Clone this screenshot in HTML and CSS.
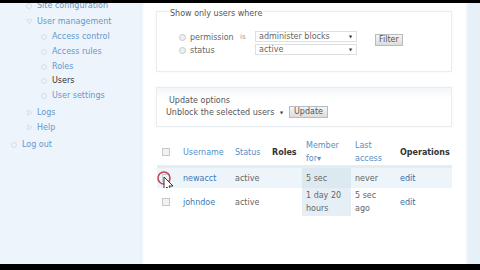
FILE: index.html
```html
<!DOCTYPE html>
<html>
<head>
<meta charset="utf-8">
<link rel="stylesheet" href="styles.css">
</head>
<body>
<div class="screen">
  <aside class="sidebar">
    <ul class="menu">
      <li class="l1 cut"><span class="bul circ"></span><a>Site configuration</a></li>
      <li class="l1"><svg class="bul" viewBox="0 0 8 8"><path d="M1 2 L7 2 L4 6.5 Z" fill="none" stroke="#d0dae4" stroke-width="0.9"/></svg><a>User management</a></li>
      <li class="l2"><span class="bul circ"></span><a>Access control</a></li>
      <li class="l2"><span class="bul circ"></span><a>Access rules</a></li>
      <li class="l2"><span class="bul circ"></span><a>Roles</a></li>
      <li class="l2 cur"><span class="bul circ"></span><a class="active">Users</a></li>
      <li class="l2"><span class="bul circ"></span><a>User settings</a></li>
      <li class="l1 gap"><svg class="bul" viewBox="0 0 8 8"><path d="M2 1 L6.5 4 L2 7 Z" fill="none" stroke="#d0dae4" stroke-width="0.9"/></svg><a>Logs</a></li>
      <li class="l1"><svg class="bul" viewBox="0 0 8 8"><path d="M2 1 L6.5 4 L2 7 Z" fill="none" stroke="#d0dae4" stroke-width="0.9"/></svg><a>Help</a></li>
      <li class="l0 gap"><span class="bul circ"></span><a>Log out</a></li>
    </ul>
  </aside>
  <div class="edge"></div>
  <main class="content">
    <div class="fs fs1">
      <div class="legend">Show only users where</div>
      <div class="filter">
        <div class="fcol radios">
          <div class="ropt"><span class="radio"></span>permission</div>
          <div class="ropt"><span class="radio"></span>status</div>
        </div>
        <div class="fcol is">is</div>
        <div class="fcol selects">
          <div class="sel w102"><span>administer blocks</span><span class="arr">▼</span></div>
          <div class="sel w102"><span>active</span><span class="arr">▼</span></div>
        </div>
        <div class="btn filterbtn">Filter</div>
      </div>
    </div>
    <div class="fs fs2">
      <div class="legend2">Update options</div>
      <div class="urow">
        <div class="sel plain"><span>Unblock the selected users</span><span class="arr">▼</span></div>
        <div class="btn">Update</div>
      </div>
    </div>
    <table class="users">
      <colgroup>
        <col class="c1"><col class="c2"><col class="c3"><col class="c4"><col class="c5"><col class="c6"><col class="c7">
      </colgroup>
      <thead>
        <tr>
          <th><span class="cb"></span></th>
          <th><a>Username</a></th>
          <th><a>Status</a></th>
          <th class="plain">Roles</th>
          <th><a>Member for▾</a></th>
          <th><a>Last access</a></th>
          <th class="plain">Operations</th>
        </tr>
      </thead>
      <tbody>
        <tr class="odd r1">
          <td class="cbcell"><span class="cb"></span>
            <svg class="cursor" width="22" height="24" viewBox="0 0 22 24">
              <circle cx="7" cy="7" r="6" fill="none" stroke="#c0485a" stroke-width="1.6"/>
              <path d="M7 6 L7 19 L10 16 L12.5 21 L14.5 20 L12 15 L16 15 Z" fill="#fff" stroke="#222" stroke-width="0.9" stroke-linejoin="round"/>
            </svg>
          </td>
          <td><a>newacct</a></td>
          <td>active</td>
          <td></td>
          <td class="act">5 sec</td>
          <td>never</td>
          <td><a class="op">edit</a></td>
        </tr>
        <tr class="even r2">
          <td class="cbcell"><span class="cb"></span></td>
          <td><a>johndoe</a></td>
          <td>active</td>
          <td></td>
          <td class="act">1 day 20 hours</td>
          <td class="narrow">5 sec ago</td>
          <td><a class="op">edit</a></td>
        </tr>
      </tbody>
    </table>
  </main>
  <div class="rstrip"></div>
</div>
</body>
</html>
```
FILE: styles.css
```css
html, body {
  margin: 0;
  padding: 0;
  background: #000;
  width: 480px;
  height: 270px;
  overflow: hidden;
}
.screen {
  margin-top: 3px;
  height: 261px;
  display: flex;
  font-family: "DejaVu Sans", Verdana, sans-serif;
  font-size: 8px;
  color: #555;
  background: #fff;
}
a { color: #3a78b4; text-decoration: none; }
.sidebar {
  width: 140px;
  background: #edf4fb;
  flex: none;
  overflow: hidden;
}
.edge {
  width: 4px;
  flex: none;
  background: linear-gradient(to right, #e4eef8, #fbfdff);
}
.menu {
  list-style: none;
  margin: -5px 0 0 0;
  padding: 0;
}
.menu li {
  height: 15px;
  line-height: 15px;
  display: flex;
  align-items: center;
  white-space: nowrap;
}
.menu li:nth-child(2) { margin-top: 1px; }
.menu li.cur { margin-top: -1px; }
.menu li.gap { margin-top: 2px; }
.menu li a { color: #6598cb; }
.menu li a.active { color: #333; }
.menu .l0 { padding-left: 11px; }
.menu .l1 { padding-left: 26px; }
.menu .l2 { padding-left: 41px; }
.bul {
  width: 7px;
  height: 7px;
  margin-right: 4px;
  flex: none;
  box-sizing: border-box;
}
.bul.circ {
  width: 6px;
  height: 6px;
  margin-right: 5px;
  border: 1px solid #d6dfe8;
  border-radius: 50%;
}
.content {
  width: 322px;
  flex: none;
  padding: 7px 0 0 12px;
  box-sizing: border-box;
}
.rstrip {
  flex: 1;
  background: linear-gradient(to right, #f4f8fc, #e6f0f9 3px);
}
.fs {
  width: 296px;
  box-sizing: border-box;
  border: 1px solid #e8edf1;
  box-shadow: 0 0 2px #eef2f5;
}
.fs1 {
  height: 61px;
  margin-top: 1px;
  padding: 0 0 0 12px;
  border-top-color: #eceff2;
}
.legend {
  color: #555;
  margin-top: -3px;
  background: #fff;
  display: table;
  padding: 0 1px;
  line-height: 10px;
}
.filter {
  display: flex;
  margin-top: 12px;
  align-items: flex-start;
}
.fcol { display: flex; flex-direction: column; }
.radios { width: 59px; padding-left: 10px; }
.ropt {
  height: 13px;
  display: flex;
  align-items: center;
  color: #666;
}
.radio {
  width: 7px;
  height: 7px;
  box-sizing: border-box;
  border: 1px solid #c4c9ce;
  border-radius: 50%;
  background: #eef0f2;
  margin-right: 4px;
}
.is { width: 17px; height: 13px; line-height: 13px; color: #999; font-size: 7px; padding-left: 2px; box-sizing: border-box; }
.selects { gap: 2px; }
.sel {
  height: 11px;
  box-sizing: border-box;
  border: 1px solid #dde0e3;
  display: flex;
  justify-content: space-between;
  align-items: center;
  padding: 0 4px 0 3px;
  background: #fff;
  color: #666;
  line-height: 9px;
}
.w102 { width: 102px; }
.arr { font-size: 4px; color: #333; }
.btn {
  height: 12px;
  box-sizing: border-box;
  border: 1px solid #b8bcc0;
  background: linear-gradient(#f4f4f4, #dcdcdc);
  color: #555;
  padding: 0 3px;
  line-height: 10px;
}
.filterbtn { margin-left: 18px; margin-top: 3px; }
.fs2 {
  margin-top: 15px;
  height: 40px;
  background: linear-gradient(#f2f6f9, #fff 11px);
  padding: 0 0 0 8px;
}
.legend2 {
  margin: 8px 0 0 4px;
  line-height: 10px;
  color: #555;
}
.urow {
  display: flex;
  gap: 4px;
}
.sel.plain {
  border: none;
  background: transparent;
  width: 120px;
  padding: 0 0 0 1px;
  height: 12px;
  color: #555;
}
.sel.plain .arr { margin-right: 2px; }
.urow .btn { width: 39px; text-align: center; }
.users {
  margin-top: 12px;
  border-collapse: collapse;
  table-layout: fixed;
  width: 295px;
  margin-left: 1px;
}
.c1 { width: 22px; }
.c2 { width: 52px; }
.c3 { width: 37px; }
.c4 { width: 34px; }
.c5 { width: 49px; }
.c6 { width: 45px; }
.c7 { width: 56px; }
.users th {
  text-align: left;
  font-weight: normal;
  padding: 0 0 0 4px;
  height: 23px;
  line-height: 13px;
  vertical-align: middle;
  border-bottom: 3px solid #e3edf4;
}
.users th a { color: #5590c6; }
.users th.plain { font-weight: bold; color: #333; }
.users th:first-child, .users td.cbcell { padding-left: 5px; }
.users td {
  padding: 0 0 0 4px;
  line-height: 13px;
  vertical-align: middle;
  color: #666;
}
.users td.narrow { padding-right: 12px; }
.users td a { color: #3a78b4; }
.users td a.op { color: #2e6fb0; }
.r1 td { height: 20px; background: #edf4fa; }
.r2 td { height: 28px; background: #fff; }
.r1 td.act { background: #dde9f1; }
.r2 td.act { background: #e6eff5; }
.cb {
  display: inline-block;
  width: 8px;
  height: 8px;
  box-sizing: border-box;
  border: 1px solid #c5c9cd;
  background: #f1f2f3;
  vertical-align: middle;
}
.cbcell { position: relative; }
.cursor {
  position: absolute;
  left: 0;
  top: 3px;
}
```
